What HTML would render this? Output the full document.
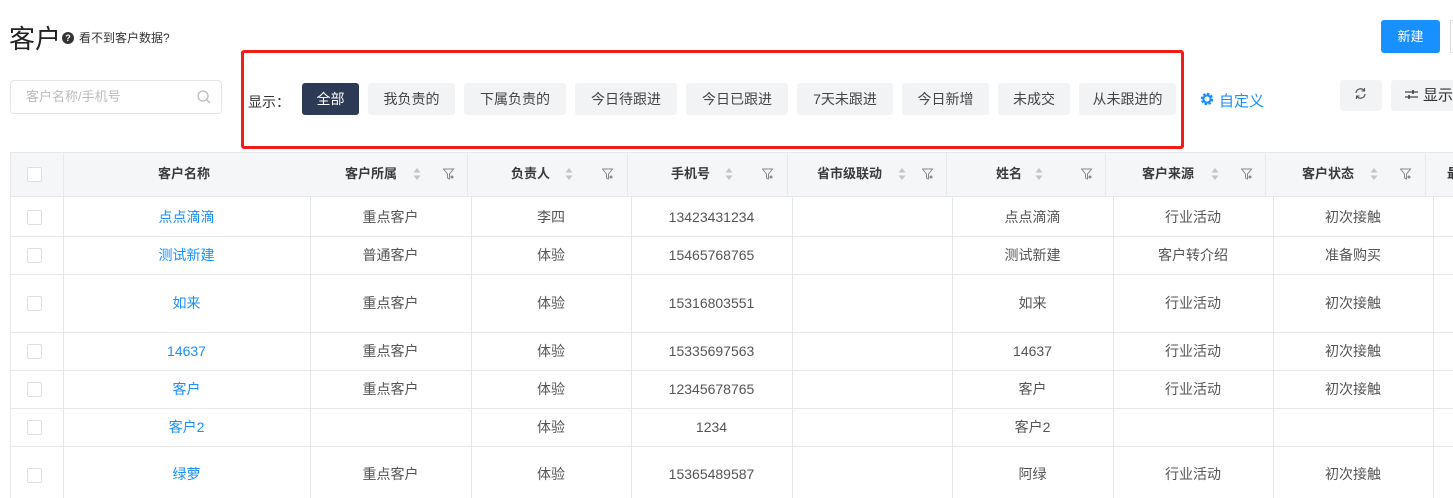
<!DOCTYPE html>
<html><head><meta charset="utf-8"><style>
*{box-sizing:border-box;margin:0;padding:0}
body{width:1453px;height:498px;overflow:hidden;background:#fff;font-family:"Liberation Sans","Noto Sans CJK SC",sans-serif;color:#333;position:relative}
.a{position:absolute}
.btn{position:absolute;top:83px;height:32px;background:#f2f3f5;border-radius:3px;font-size:14px;color:#444;line-height:32px;text-align:center}
.hd{position:absolute;top:152px;height:45px;background:#f5f6f8;border-top:1px solid #e6e8eb;border-bottom:1px solid #e6e8eb}
.hc{position:absolute;top:152px;height:45px;line-height:44px;font-size:13px;font-weight:bold;color:#3a3a3a}
.vl{position:absolute;width:1px;background:#e6e8eb}
.hl{position:absolute;left:10px;right:0;height:1px;background:#e6e8eb}
.c{position:absolute;font-size:14px;color:#555;text-align:center;line-height:20px;height:20px}
.cb{position:absolute;left:27px;width:15px;height:15px;border:1px solid #dcdfe6;border-radius:2px;background:#fff}
</style></head><body>
<div class="a" style="left:9px;top:22px;font-size:26px;color:#222;line-height:34px">客户</div>
<div class="a" style="left:62px;top:32px;width:12px;height:12px;border-radius:50%;background:#333;color:#fff;font-size:9px;line-height:12px;text-align:center;font-weight:bold">?</div>
<div class="a" style="left:79px;top:29px;font-size:12px;color:#333">看不到客户数据?</div>
<div class="a" style="left:1381px;top:20px;width:59px;height:33px;background:#1890ff;border-radius:3px;color:#fff;font-size:13px;line-height:33px;text-align:center">新建</div>
<div class="a" style="left:1450px;top:20px;width:3px;height:33px;border:1px solid #ddd;border-right:none"></div>
<div class="a" style="left:10px;top:80px;width:212px;height:34px;border:1px solid #e2e4e8;border-radius:4px;font-size:13px;color:#bbb;line-height:32px;padding-left:15px">客户名称/手机号</div>
<svg class="a" style="left:197px;top:90px" width="14" height="14" viewBox="0 0 14 14"><circle cx="6" cy="6" r="5" fill="none" stroke="#bbb" stroke-width="1.3"/><path d="M10 10l3 3" stroke="#bbb" stroke-width="1.3"/></svg>
<div class="a" style="left:241px;top:50px;width:943px;height:99px;border:3px solid #f21b16;border-radius:3px"></div>
<div class="a" style="left:248px;top:92px;font-size:14px;color:#333">显示：</div>
<div class="btn" style="left:302px;width:57px;background:#2d3a55;color:#fff">全部</div>
<div class="btn" style="left:368px;width:87px">我负责的</div>
<div class="btn" style="left:464px;width:102px">下属负责的</div>
<div class="btn" style="left:575px;width:102px">今日待跟进</div>
<div class="btn" style="left:686px;width:102px">今日已跟进</div>
<div class="btn" style="left:797px;width:96px">7天未跟进</div>
<div class="btn" style="left:902px;width:87px">今日新增</div>
<div class="btn" style="left:998px;width:72px">未成交</div>
<div class="btn" style="left:1079px;width:97px">从未跟进的</div>
<svg class="a" style="left:1200px;top:92px" width="14" height="14" viewBox="0 0 14 14"><circle cx="7" cy="7" r="4.5" fill="none" stroke="#1890ff" stroke-width="3.4" stroke-dasharray="2.2 1.3"/><circle cx="7" cy="7" r="3.6" fill="none" stroke="#1890ff" stroke-width="2"/></svg>
<div class="a" style="left:1219px;top:90px;font-size:15px;color:#1890ff">自定义</div>
<div class="btn" style="left:1340px;top:80px;width:42px;height:31px"></div>
<svg class="a" style="left:1354px;top:87px" width="13" height="13" viewBox="0 0 13 13"><path d="M2 6a4.5 4.5 0 0 1 8-2.5M11 7a4.5 4.5 0 0 1-8 2.5" fill="none" stroke="#555" stroke-width="1.2"/><path d="M10.5 1v3h-3M2.5 12V9h3" fill="none" stroke="#555" stroke-width="1.1"/></svg>
<div class="btn" style="left:1391px;top:80px;width:70px;height:31px;text-align:left;padding-left:32px;line-height:31px;font-size:15px;color:#333">显示</div>
<svg class="a" style="left:1405px;top:89px" width="13" height="12" viewBox="0 0 13 12"><path d="M0 3h13M0 8h13" stroke="#444" stroke-width="1.2"/><path d="M8 1v4M4 6v4" stroke="#444" stroke-width="1.6"/></svg>

<div class="hd" style="left:10px;right:0"></div>
<div class="vl" style="left:10px;top:152px;height:346px"></div>
<div class="vl" style="left:63px;top:152px;height:45px"></div>
<div class="vl" style="left:467px;top:152px;height:45px"></div>
<div class="vl" style="left:627px;top:152px;height:45px"></div>
<div class="vl" style="left:787px;top:152px;height:45px"></div>
<div class="vl" style="left:946px;top:152px;height:45px"></div>
<div class="vl" style="left:1105px;top:152px;height:45px"></div>
<div class="vl" style="left:1265px;top:152px;height:45px"></div>
<div class="vl" style="left:1425px;top:152px;height:45px"></div>
<div class="cb" style="top:167px"></div>
<div class="hc" style="left:158px">客户名称</div>
<div class="hc" style="left:345px">客户所属</div>
<div class="hc" style="left:511px">负责人</div>
<div class="hc" style="left:671px">手机号</div>
<div class="hc" style="left:817px">省市级联动</div>
<div class="hc" style="left:996px">姓名</div>
<div class="hc" style="left:1142px">客户来源</div>
<div class="hc" style="left:1302px">客户状态</div>
<div class="hc" style="left:1447px">最</div>
<svg width="0" height="0" style="position:absolute"><defs><g id="s"><path d="M4 0L7.5 4.5H0.5Z M4 12L7.5 7.5H0.5Z" fill="#c0c4cc"/></g><g id="f"><path d="M0.5 1H10.5L6.5 6V11L4.5 10V6Z" fill="none" stroke="#888" stroke-width="1"/><circle cx="9" cy="9" r="1.5" fill="#888"/></g></defs></svg>
<svg class="a" style="left:413px;top:168px" width="8" height="12"><use href="#s"/></svg>
<svg class="a" style="left:443px;top:168px" width="12" height="12"><use href="#f"/></svg>
<svg class="a" style="left:565px;top:168px" width="8" height="12"><use href="#s"/></svg>
<svg class="a" style="left:602px;top:168px" width="12" height="12"><use href="#f"/></svg>
<svg class="a" style="left:725px;top:168px" width="8" height="12"><use href="#s"/></svg>
<svg class="a" style="left:762px;top:168px" width="12" height="12"><use href="#f"/></svg>
<svg class="a" style="left:898px;top:168px" width="8" height="12"><use href="#s"/></svg>
<svg class="a" style="left:922px;top:168px" width="12" height="12"><use href="#f"/></svg>
<svg class="a" style="left:1035px;top:168px" width="8" height="12"><use href="#s"/></svg>
<svg class="a" style="left:1081px;top:168px" width="12" height="12"><use href="#f"/></svg>
<svg class="a" style="left:1211px;top:168px" width="8" height="12"><use href="#s"/></svg>
<svg class="a" style="left:1241px;top:168px" width="12" height="12"><use href="#f"/></svg>
<svg class="a" style="left:1370px;top:168px" width="8" height="12"><use href="#s"/></svg>
<svg class="a" style="left:1400px;top:168px" width="12" height="12"><use href="#f"/></svg>

<div class="vl" style="left:63px;top:197px;height:301px"></div>
<div class="vl" style="left:310px;top:197px;height:301px"></div>
<div class="vl" style="left:471px;top:197px;height:301px"></div>
<div class="vl" style="left:631px;top:197px;height:301px"></div>
<div class="vl" style="left:792px;top:197px;height:301px"></div>
<div class="vl" style="left:952px;top:197px;height:301px"></div>
<div class="vl" style="left:1113px;top:197px;height:301px"></div>
<div class="vl" style="left:1273px;top:197px;height:301px"></div>
<div class="vl" style="left:1433px;top:197px;height:301px"></div>
<div class="hl" style="top:236px"></div>
<div class="hl" style="top:274px"></div>
<div class="hl" style="top:332px"></div>
<div class="hl" style="top:370px"></div>
<div class="hl" style="top:408px"></div>
<div class="hl" style="top:446px"></div>

<div class="cb" style="top:210px"></div><div class="cb" style="top:248px"></div><div class="cb" style="top:296px"></div><div class="cb" style="top:344px"></div><div class="cb" style="top:382px"></div><div class="cb" style="top:420px"></div><div class="cb" style="top:468px"></div>

<div class="c" style="top:207px;left:63px;width:247px;color:#1890ff">点点滴滴</div>
<div class="c" style="top:207px;left:310px;width:161px">重点客户</div>
<div class="c" style="top:207px;left:471px;width:160px">李四</div>
<div class="c" style="top:207px;left:631px;width:161px">13423431234</div>
<div class="c" style="top:207px;left:952px;width:161px">点点滴滴</div>
<div class="c" style="top:207px;left:1113px;width:160px">行业活动</div>
<div class="c" style="top:207px;left:1273px;width:160px">初次接触</div>

<div class="c" style="top:245px;left:63px;width:247px;color:#1890ff">测试新建</div>
<div class="c" style="top:245px;left:310px;width:161px">普通客户</div>
<div class="c" style="top:245px;left:471px;width:160px">体验</div>
<div class="c" style="top:245px;left:631px;width:161px">15465768765</div>
<div class="c" style="top:245px;left:952px;width:161px">测试新建</div>
<div class="c" style="top:245px;left:1113px;width:160px">客户转介绍</div>
<div class="c" style="top:245px;left:1273px;width:160px">准备购买</div>

<div class="c" style="top:293px;left:63px;width:247px;color:#1890ff">如来</div>
<div class="c" style="top:293px;left:310px;width:161px">重点客户</div>
<div class="c" style="top:293px;left:471px;width:160px">体验</div>
<div class="c" style="top:293px;left:631px;width:161px">15316803551</div>
<div class="c" style="top:293px;left:952px;width:161px">如来</div>
<div class="c" style="top:293px;left:1113px;width:160px">行业活动</div>
<div class="c" style="top:293px;left:1273px;width:160px">初次接触</div>

<div class="c" style="top:341px;left:63px;width:247px;color:#1890ff">14637</div>
<div class="c" style="top:341px;left:310px;width:161px">重点客户</div>
<div class="c" style="top:341px;left:471px;width:160px">体验</div>
<div class="c" style="top:341px;left:631px;width:161px">15335697563</div>
<div class="c" style="top:341px;left:952px;width:161px">14637</div>
<div class="c" style="top:341px;left:1113px;width:160px">行业活动</div>
<div class="c" style="top:341px;left:1273px;width:160px">初次接触</div>

<div class="c" style="top:379px;left:63px;width:247px;color:#1890ff">客户</div>
<div class="c" style="top:379px;left:310px;width:161px">重点客户</div>
<div class="c" style="top:379px;left:471px;width:160px">体验</div>
<div class="c" style="top:379px;left:631px;width:161px">12345678765</div>
<div class="c" style="top:379px;left:952px;width:161px">客户</div>
<div class="c" style="top:379px;left:1113px;width:160px">行业活动</div>
<div class="c" style="top:379px;left:1273px;width:160px">初次接触</div>

<div class="c" style="top:417px;left:63px;width:247px;color:#1890ff">客户2</div>
<div class="c" style="top:417px;left:471px;width:160px">体验</div>
<div class="c" style="top:417px;left:631px;width:161px">1234</div>
<div class="c" style="top:417px;left:952px;width:161px">客户2</div>

<div class="c" style="top:464px;left:63px;width:247px;color:#1890ff">绿萝</div>
<div class="c" style="top:464px;left:310px;width:161px">重点客户</div>
<div class="c" style="top:464px;left:471px;width:160px">体验</div>
<div class="c" style="top:464px;left:631px;width:161px">15365489587</div>
<div class="c" style="top:464px;left:952px;width:161px">阿绿</div>
<div class="c" style="top:464px;left:1113px;width:160px">行业活动</div>
<div class="c" style="top:464px;left:1273px;width:160px">初次接触</div>
</body></html>
